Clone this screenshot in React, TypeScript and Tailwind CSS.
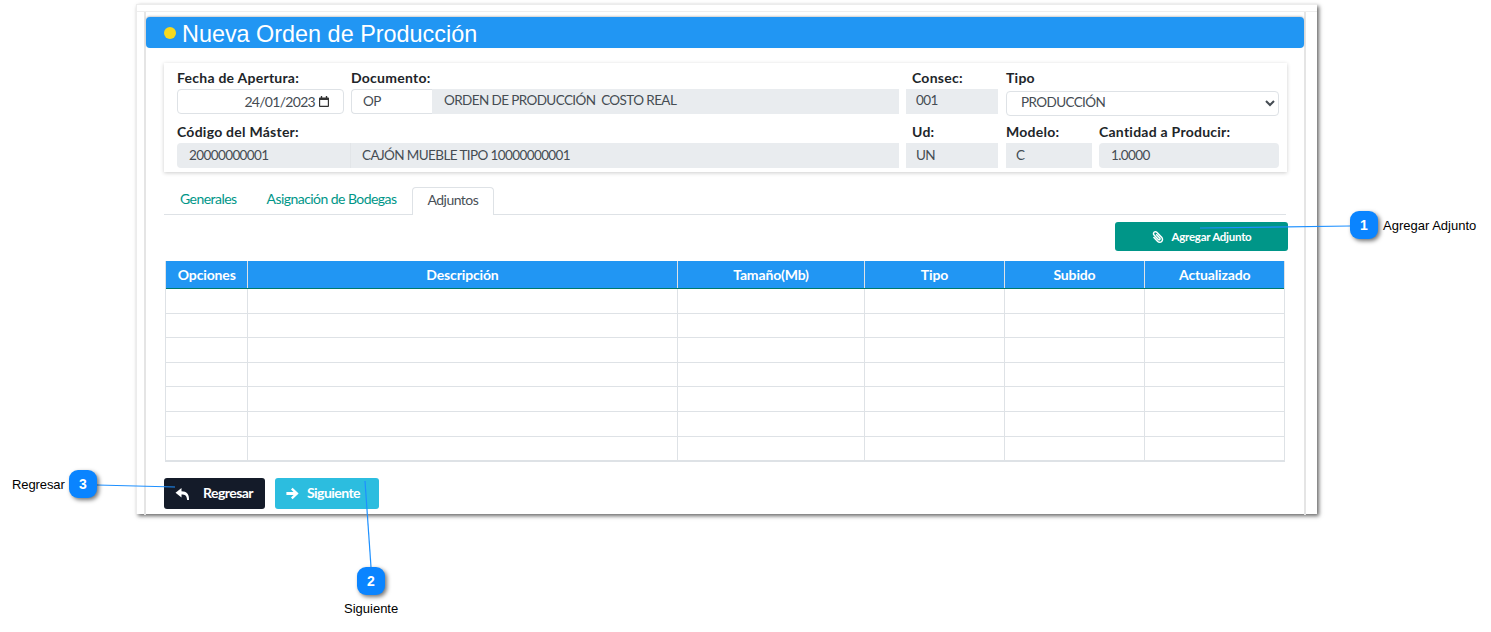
import { FaPaperclip } from "react-icons/fa";

const lato = "font-['Lato','Noto_Sans',sans-serif]";

function Label({ children }: { children: React.ReactNode }) {
  return <div className="h-[21px] whitespace-pre text-[14px] leading-[19px] font-bold tracking-[0.25px] text-[#212529]">{children}</div>;
}

function Field({ label, width, children, className = "", labelClass = "" }: { label: string; width: string; children: React.ReactNode; className?: string; labelClass?: string }) {
  return (
    <div className={`${width} shrink-0 ${className}`}>
      <div className={labelClass}>
        <Label>{label}</Label>
      </div>
      {children}
    </div>
  );
}

const ro = "h-[25px] bg-[#e9ecef] text-[13.5px] leading-[23px] tracking-[-0.6px] text-[#454c53]";
const ro2 = "h-[25px] bg-[#e9ecef] text-[13.5px] leading-[25px] tracking-[-0.6px] text-[#454c53]";

const columns = ["w-[81.5px]", "w-[430px]", "w-[187px]", "w-[140px]", "w-[140px]", "w-[139.5px]"];
const heads = ["Opciones", "Descripción", "Tamaño(Mb)", "Tipo", "Subido", "Actualizado"];

function Row() {
  return (
    <div className="flex h-[24.6px] border-b border-[#dee2e6]">
      {columns.map((c, i) => (
        <div key={i} className={`${c} shrink-0 border-r border-[#dee2e6] last:border-r-0`} />
      ))}
    </div>
  );
}

function Badge({ n, className }: { n: number; className: string }) {
  return (
    <div className={`absolute flex h-[28px] w-[28px] items-center justify-center rounded-[9px] bg-[#0a84ff] font-['Liberation_Sans',sans-serif] text-[14px] font-bold text-white shadow-[2px_2px_4px_rgba(0,0,0,0.55)] ${className}`}>
      {n}
    </div>
  );
}

export default function App() {
  return (
    <div className={`relative h-[632px] w-[1491px] overflow-hidden bg-white ${lato}`}>
      <div className="ml-[136px] h-[515px] w-[1181px] pt-[4px]">
        <div className="h-[510px] border-t border-l border-[#ececec] bg-white pt-[6px] shadow-[2px_2px_4px_rgba(0,0,0,0.6)]">
          <div className="border-t border-[#eeeeee] pl-[7px] pr-[11px]">
            <div className="h-[503px] border-x-2 border-[#e5e5e5] pt-[5px]">
              {/* Title */}
              <div className="flex h-[31px] items-center rounded-[4px] bg-[#2196f3] pl-[18px] shadow-[0_-1px_2px_rgba(0,0,0,0.2)]">
                <span className="h-[12px] w-[12px] rounded-full bg-[#f6d91f]" />
                <span className="ml-[6px] pt-[2px] font-['Liberation_Sans',sans-serif] text-[23.4px] leading-[30px] text-white">Nueva Orden de Producción</span>
              </div>

              {/* Form card */}
              <div className="ml-[18px] mt-[15px] h-[109px] w-[1123px] bg-white px-[13px] pt-[5px] shadow-[0_1px_4px_rgba(0,0,0,0.2)]">
                <div className="flex h-[46px]">
                  <Field label="Fecha de Apertura:" width="w-[167px]" className="mr-[7px]">
                    <div className="flex h-[25px] items-center justify-end rounded-[4px] border border-[#dee2e6] pr-[14px] text-[14px] tracking-[-0.7px] text-[#454c53]">
                      <span>24/01/2023</span>
                      <svg className="ml-[4px]" width="10" height="11" viewBox="0 0 11 12">
                        <path fill="#333" d="M2 0h1.5v1.5h4V0H9v1.5h1a1 1 0 0 1 1 1V11a1 1 0 0 1-1 1H1a1 1 0 0 1-1-1V2.5a1 1 0 0 1 1-1h1zM1.3 4.3v6.4h8.4V4.3z" />
                      </svg>
                    </div>
                  </Field>
                  <Field label="Documento:" width="w-[548px]" className="mr-[7px]">
                    <div className="flex">
                      <div className="h-[25px] w-[81px] rounded-l-[4px] border border-r-0 border-[#dee2e6] pl-[11px] text-[13.5px] leading-[22px] tracking-[-0.6px] text-[#454c53]">OP</div>
                      <div className={`${ro} flex-1 whitespace-pre pl-[12px]`}>ORDEN DE PRODUCCIÓN  COSTO REAL</div>
                    </div>
                  </Field>
                  <Field label="Consec:" labelClass="pl-[6px]" width="w-[92px]" className="mr-[8px]">
                    <div className={`${ro} pl-[10px]`}>001</div>
                  </Field>
                  <Field label="Tipo" width="w-[273px]">
                    <select defaultValue="p" className="h-[25px] w-full rounded-[4px] border border-[#dee2e6] bg-white pb-[2px] pl-[10px] text-[13.5px] tracking-[-0.6px] text-[#454c53]">
                      <option value="p">PRODUCCIÓN</option>
                    </select>
                  </Field>
                </div>
                <div className="mt-[8px] flex h-[46px]">
                  <Field label="Código del Máster:" width="w-[722px]" className="mr-[7px]">
                    <div className="flex">
                      <div className={`${ro2} w-[173px] rounded-l-[4px] pl-[12px]`}>20000000001</div>
                      <div className={`${ro2} flex-1 border-l border-[#e2e5e8] pl-[11px]`}>CAJÓN MUEBLE TIPO 10000000001</div>
                    </div>
                  </Field>
                  <Field label="Ud:" labelClass="pl-[6px]" width="w-[92px]" className="mr-[8px]">
                    <div className={`${ro2} pl-[10px]`}>UN</div>
                  </Field>
                  <Field label="Modelo:" width="w-[86px]" className="mr-[7px]">
                    <div className={`${ro2} pl-[10px]`}>C</div>
                  </Field>
                  <Field label="Cantidad a Producir:" width="w-[180px]">
                    <div className={`${ro2} rounded-[4px] pl-[12px]`}>1.0000</div>
                  </Field>
                </div>
              </div>

              {/* Tabs */}
              <div className="ml-[18px] mt-[15px] flex h-[28px] w-[1122px] border-b border-[#dee2e6] text-[14px] leading-[24px] tracking-[-0.55px]">
                <div className="pl-[16px] pr-[15px] text-[#009688]">Generales</div>
                <div className="px-[15px] text-[#009688]">Asignación de Bodegas</div>
                <div className="h-[28px] rounded-t-[4px] border border-b-0 border-[#dee2e6] bg-white px-[15px] text-[#495057]">Adjuntos</div>
              </div>

              {/* Add button */}
              <div className="ml-[18px] mt-[7px] flex w-[1124px] justify-end">
                <div className="flex h-[29px] w-[173px] items-center justify-center gap-[8px] rounded-[3px] bg-[#009688] text-[11.5px] font-bold tracking-[-0.25px] text-white">
                  <FaPaperclip className="-scale-x-100 text-[12px]" />
                  <span>Agregar Adjunto</span>
                </div>
              </div>

              {/* Table */}
              <div className="ml-[19px] mt-[10px] w-[1120px] border-x border-b border-[#dee2e6]">
                <div className="flex h-[28px] border-b border-[#00796b] bg-[#2196f3]">
                  {heads.map((h, i) => (
                    <div key={h} className={`${columns[i]} shrink-0 border-r border-[#dee2e6] pl-[1px] text-center text-[14px] font-bold leading-[27px] tracking-[-0.15px] text-white last:border-r-0`}>
                      {h}
                    </div>
                  ))}
                </div>
                {[0, 1, 2, 3, 4, 5, 6].map((i) => (
                  <Row key={i} />
                ))}
              </div>

              {/* Footer */}
              <div className="ml-[18px] mt-[16px] flex gap-[10px] text-[14px] font-bold tracking-[-0.55px] text-white">
                <div className="flex h-[31px] w-[101px] items-center rounded-[3px] bg-[#141b29] pl-[11px]">
                  <svg width="15" height="14" viewBox="0 0 15 14" fill="#fff">
                    <path d="M6.5 1 0.5 5.8 6.5 10.5V7.4c3.6 0 5.3.9 5.6 5.6h1.9c.4-5.6-2.3-8.8-7.5-8.8z" />
                  </svg>
                  <span className="ml-[13px] pb-[2px]">Regresar</span>
                </div>
                <div className="flex h-[31px] w-[104px] items-center rounded-[3px] bg-[#2cbddf] pl-[11px]">
                  <svg width="13" height="13" viewBox="0 0 13 13" fill="#fff">
                    <path d="M6.6 0.8 12.6 6.5 6.6 12.2 5 10.6 7.6 8H0.4V5H7.6L5 2.4z" />
                  </svg>
                  <span className="ml-[8px] pb-[2px]">Siguiente</span>
                </div>
              </div>
            </div>
          </div>
        </div>
      </div>

      {/* Callout lines */}
      <svg className="absolute left-0 top-0" width="1491" height="632">
        <line x1="1200" y1="228" x2="1350" y2="226" stroke="#1e90ff" strokeWidth="1.2" />
        <line x1="365" y1="481" x2="371" y2="567" stroke="#1e90ff" strokeWidth="1.2" />
        <line x1="97" y1="485" x2="175" y2="487" stroke="#1e90ff" strokeWidth="1.2" />
      </svg>

      <Badge n={1} className="left-[1350px] top-[211px]" />
      <Badge n={2} className="left-[357px] top-[567px]" />
      <Badge n={3} className="left-[69px] top-[470px]" />

      <div className="absolute left-[1383px] top-[218px] font-['Liberation_Sans',sans-serif] text-[13px] leading-[15px] text-black">Agregar Adjunto</div>
      <div className="absolute left-[344px] top-[601px] font-['Liberation_Sans',sans-serif] text-[13px] leading-[15px] text-black">Siguiente</div>
      <div className="absolute left-[12px] top-[477px] font-['Liberation_Sans',sans-serif] text-[13px] leading-[15px] tracking-[-0.1px] text-black">Regresar</div>
    </div>
  );
}
